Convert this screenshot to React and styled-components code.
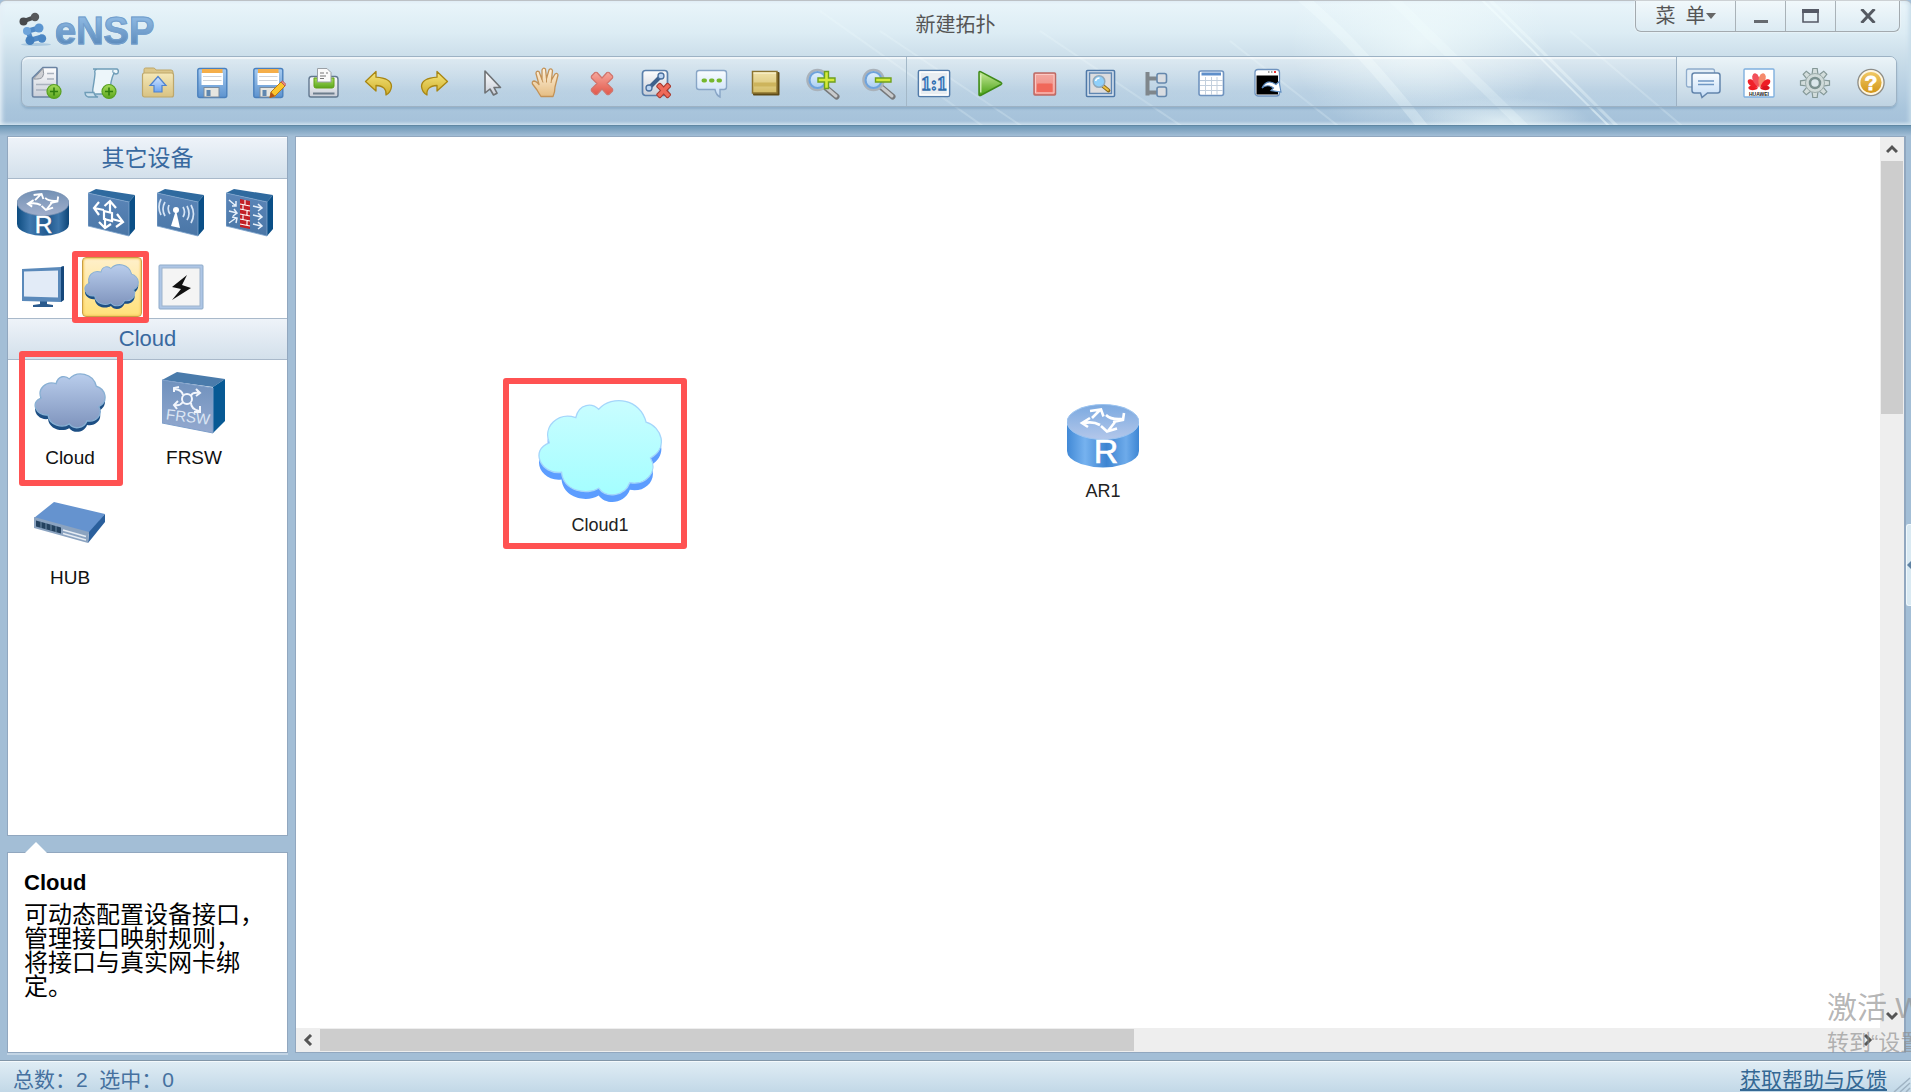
import React from 'react';
import styled, { createGlobalStyle } from 'styled-components';

const GlobalStyle = createGlobalStyle`
  * {
    box-sizing: border-box;
  }
  body {
    margin: 0;
    font-family: 'Liberation Sans', 'Noto Sans CJK SC', sans-serif;
    background: #a3bed6;
  }
  button {
    margin: 0;
    padding: 0;
    border: 0;
    background: none;
    font: inherit;
    color: inherit;
  }
  svg {
    display: block;
  }
`;

const Window = styled.div`
  position: relative;
  display: flex;
  flex-direction: column;
  height: 100vh;
  overflow: hidden;
`;

/* ---------- header ---------- */

const Header = styled.header`
  position: relative;
  padding-bottom: 18px;
  border-top: 1px solid #bcc1c5;
  border-bottom: 1px solid #5f87a3;
  border-radius: 6px 6px 0 0;
  background: linear-gradient(#e9f5fa 0, #dcecf4 32px, #cbdeea 56px, #a9c5dc 108px, #a6c2da 120px, #c3d8e8 124px);
  box-shadow: inset 3px 0 4px -1px #e4eff6, inset -3px 0 4px -1px #c6dbe9;
`;

const Streaks = styled.svg`
  position: absolute;
  top: 0;
  left: 0;
  pointer-events: none;
`;

const TitleRow = styled.div`
  position: relative;
  display: grid;
  grid-template-columns: 1fr auto 1fr;
  height: 55px;
`;

const Logo = styled.div`
  display: flex;
  align-items: flex-start;
  padding: 10px 0 0 18px;
`;

const LogoText = styled.span`
  margin-left: 3px;
  font-size: 38px;
  line-height: 40px;
  font-weight: bold;
  color: transparent;
  background: linear-gradient(#8bb6e0 20%, #5b8abb 85%);
  background-clip: text;
  -webkit-background-clip: text;
  -webkit-text-stroke: 1px #739fcd;
`;

const Title = styled.h1`
  margin: 0;
  padding-top: 9px;
  font-size: 20px;
  line-height: 30px;
  font-weight: normal;
  color: #555;
`;

const WindowControls = styled.div`
  display: flex;
  justify-self: end;
  height: 31px;
  margin-right: 11px;
  border: 1px solid #a3aaaf;
  border-top: 0;
  border-radius: 0 0 6px 6px;
  background: linear-gradient(#f1f8fb, #dcebf3);
  box-shadow: 0 0 2px #fff;
`;

const ControlButton = styled.button`
  display: flex;
  align-items: center;
  justify-content: center;
  width: ${({ $width }) => $width}px;
  font-size: 20px;
  line-height: 30px;
  color: #555;
  & + & {
    border-left: 1px solid #a9b2b8;
  }
`;

const Toolbar = styled.div`
  position: relative;
  display: flex;
  height: 51px;
  margin: 0 14px 0 21px;
  border: 1px solid #9db2c4;
  border-radius: 7px;
  background: linear-gradient(rgba(255, 255, 255, 0.35), rgba(255, 255, 255, 0.08) 70%, rgba(200, 220, 235, 0.4));
  box-shadow: inset 0 2px 1px rgba(255, 255, 255, 0.6), 0 2px 2px rgba(95, 135, 170, 0.35);
`;

const EditTools = styled.div`
  display: flex;
  justify-content: space-between;
  width: 885px;
  padding-right: 4px;
  border-right: 1px solid #a3b8c8;
`;

const RunTools = styled.div`
  display: flex;
  flex: 1;
  gap: 8px;
  padding-left: 2px;
`;

const HelpTools = styled.div`
  display: flex;
  gap: 8px;
  width: 220px;
  padding-left: 2px;
  border-left: 1px solid #9db2c4;
  border-radius: 0 6px 6px 0;
  background: linear-gradient(#ebf4f8, #bfd3e2);
`;

const ToolButton = styled.button`
  display: flex;
  align-items: center;
  justify-content: center;
  width: 48px;
  height: 49px;
`;

/* ---------- body ---------- */

const Body = styled.div`
  display: flex;
  flex: 1;
  gap: 7px;
  min-height: 0;
  padding: 10px 5px 7px 7px;
  background: linear-gradient(#6d97b6 0, #a3bed6 10px);
`;

const Sidebar = styled.aside`
  display: flex;
  flex-direction: column;
  gap: 16px;
  width: 281px;
`;

const Panel = styled.section`
  flex: 1;
  border: 1px solid #91a7bf;
  background: #fff;
`;

const PanelTitle = styled.h2`
  height: 42px;
  margin: 0;
  border-bottom: 1px solid #a9b9ca;
  border-top: 1px solid ${({ $divided }) => ($divided ? '#a9b9ca' : '#fff')};
  background: linear-gradient(#eef3f9, #d3e0eb);
  font-size: ${({ $divided }) => ($divided ? 22 : 23)}px;
  line-height: 40px;
  font-weight: normal;
  text-align: center;
  color: #39699f;
`;

const DeviceTypes = styled.div`
  display: grid;
  grid-template-columns: repeat(4, 69px);
  grid-template-rows: 68px 62px;
  row-gap: 9px;
`;

const TypeButton = styled.button`
  position: relative;
  display: flex;
  align-items: center;
  justify-content: center;
`;

const SelectedTile = styled.span`
  display: flex;
  align-items: center;
  justify-content: center;
  width: 60px;
  height: 60px;
  border: 1px solid #c99f45;
  border-radius: 4px;
  background: linear-gradient(#fff0cb, #ffe17a);
  box-shadow: inset 0 0 2px 1px #f5c95e;
`;

const Marker = styled.span`
  position: absolute;
  inset: ${({ $inset }) => $inset};
  border: 6px solid #ff5252;
  border-radius: 3px;
  pointer-events: none;
`;

const DeviceList = styled.div`
  display: grid;
  grid-template-columns: repeat(2, 124px);
  grid-auto-rows: 120px;
`;

const DeviceItem = styled.button`
  position: relative;
  display: flex;
  flex-direction: column;
  align-items: center;
  padding-top: 13px;
  font-size: 19px;
  line-height: 24px;
  color: #111;
`;

const DeviceArt = styled.span`
  display: flex;
  align-items: center;
  justify-content: center;
  height: 60px;
  margin-bottom: 13px;
`;

const Description = styled.section`
  position: relative;
  height: 201px;
  padding: 18px 16px;
  border: 1px solid #91a7bf;
  background: #fff;
  box-shadow: 0 2px 0 #c3d5e5;
  color: #000;
  &::before {
    content: '';
    position: absolute;
    top: -11px;
    left: 17px;
    border: 11px solid transparent;
    border-top: 0;
    border-bottom-color: #fff;
  }
  h3 {
    margin: 0;
    font-size: 22px;
    line-height: 24px;
  }
  p {
    margin: 8px 0 0;
    font-size: 24px;
    line-height: 24px;
    white-space: nowrap;
  }
`;

const Workspace = styled.main`
  display: grid;
  flex: 1;
  grid-template-columns: 1fr 24px;
  grid-template-rows: 1fr 24px;
  min-width: 0;
  border: 1px solid #91a7bf;
  border-right-width: 2px;
  background: #eee;
`;

const Canvas = styled.div`
  position: relative;
  background: #fff;
`;

const Node = styled.div`
  position: absolute;
  left: ${({ $x }) => $x}px;
  top: ${({ $y }) => $y}px;
  display: flex;
  flex-direction: column;
  align-items: center;
  gap: 10px;
  font-size: 18px;
  line-height: 24px;
  color: #222;
`;

const Scrollbar = styled.div`
  display: flex;
  flex-direction: ${({ $vertical }) => ($vertical ? 'column' : 'row')};
  background: #eee;
`;

const ScrollButton = styled.button`
  display: flex;
  align-items: center;
  justify-content: center;
  width: 24px;
  height: 24px;
  svg {
    transform: rotate(${({ $turn }) => $turn}deg);
  }
`;

const Track = styled.div`
  flex: 1;
`;

const Thumb = styled.div`
  width: ${({ $vertical }) => ($vertical ? '22px' : '53%')};
  height: ${({ $vertical }) => ($vertical ? '30%' : '22px')};
  margin: ${({ $vertical }) => ($vertical ? '0 1px' : '1px 0')};
  background: #cdcdcd;
`;

const SideHandle = styled.button`
  position: absolute;
  right: 0;
  top: 524px;
  display: flex;
  align-items: center;
  width: 5px;
  height: 82px;
  border-radius: 3px 0 0 3px;
  background: #d9e9f2;
  border: 1px solid #eff7fb;
  border-right: 0;
`;

const Watermark = styled.div`
  position: absolute;
  top: 986px;
  left: calc(100% - 84px);
  color: rgba(140, 140, 140, 0.65);
  white-space: nowrap;
  pointer-events: none;
  font-size: 30px;
  line-height: 44px;
  small {
    display: block;
    font-size: 22px;
    line-height: 26px;
  }
`;

const StatusBar = styled.footer`
  position: relative;
  display: flex;
  justify-content: space-between;
  height: 32px;
  padding: 3px 24px 0 13px;
  border-top: 1px solid #8296a8;
  background: linear-gradient(#e0edf5, #c2d8e7);
  box-shadow: inset 0 1px 0 #f4f9fc;
  font-size: 21px;
  line-height: 32px;
  color: #46719f;
  a {
    color: #346894;
    text-underline-offset: 2px;
  }
`;

const Grip = styled.svg`
  position: absolute;
  right: 0;
  bottom: 0;
`;

/* ---------- toolbar icons, all on a 36px grid ---------- */

const HiddenSvg = styled.svg`
  position: absolute;
`;

const Defs = () => (
  <HiddenSvg width="0" height="0" aria-hidden="true">
    <defs>
      {[
        ['gPaper', '#fdfdfe', '#c9ced8'],
        ['gGreen', '#a6dc5a', '#5aa51e'],
        ['gFolder', '#f5e8b8', '#d8c282'],
        ['gArrow', '#d4e6ff', '#6ea4f0'],
        ['gFloppy', '#a7cbf0', '#5d93cf'],
        ['gYellow', '#f6e67c', '#cfae2c'],
        ['gHand', '#fff3df', '#e5bd83'],
        ['gRed', '#f6a79c', '#e2574a'],
        ['gBubble', '#fafdff', '#c3dcf6'],
        ['gNote', '#f0e2aa', '#d3bc66'],
        ['gLens', '#eaf6ff', '#a3c9ef'],
        ['gPlay', '#c8ea9a', '#47a013'],
        ['gStop', '#f3aaa3', '#f08378'],
        ['gHelp', '#f4cf6e', '#cf8f0e'],
        ['gFace', '#5b86b9', '#4a76a6'],
        ['gFrsw', '#6f91bd', '#94a9cf'],
        ['gCloud', '#b9cdec', '#7f94bd'],
        ['gCyan', '#c9fdff', '#a4feff'],
        ['gTop', '#7391b5', '#a0aecb'],
        ['gTopLive', '#7ba9e0', '#b3c7ea'],
      ].map(([id, from, to]) => (
        <linearGradient key={id} id={id} x1="0" y1="0" x2="0" y2="1">
          <stop offset="0" stopColor={from} />
          <stop offset="1" stopColor={to} />
        </linearGradient>
      ))}
      <linearGradient id="gBody">
        <stop offset="0" stopColor="#0d4c80" />
        <stop offset="0.25" stopColor="#3f78ae" />
        <stop offset="0.6" stopColor="#21598e" />
        <stop offset="0.8" stopColor="#3c75aa" />
        <stop offset="1" stopColor="#0d4577" />
      </linearGradient>
      <linearGradient id="gBodyLive">
        <stop offset="0" stopColor="#4189d6" />
        <stop offset="0.25" stopColor="#76b2ef" />
        <stop offset="0.55" stopColor="#3d84d1" />
        <stop offset="0.82" stopColor="#6eabea" />
        <stop offset="1" stopColor="#3e86d4" />
      </linearGradient>
    </defs>
  </HiddenSvg>
);

const Icon = ({ children }) => (
  <svg width="36" height="36" viewBox="0 0 36 36" aria-hidden="true">
    {children}
  </svg>
);

const PlusBadge = () => (
  <g>
    <circle cx="26" cy="27.5" r="7" fill="url(#gGreen)" stroke="#58a023" strokeWidth="1.2" />
    <path d="M26 23.5v8M22 27.5h8" stroke="#2f7d0d" strokeWidth="1.6" />
  </g>
);

const NewIcon = () => (
  <Icon>
    <path d="M15 3.5h13q1 0 1 1V32q0 1-1 1H6q-1.5 0-1.500-1.500V14z" fill="url(#gPaper)" stroke="#6b84a3" strokeWidth="1.700" />
    <path d="M15 4.500q1.500 6-.5 8.500t-9 2z" fill="#cfd0d4" stroke="#8f959e" />
    <path d="M19 9.500h7M19 15h7M8 20.500h18M8 26h12" stroke="#aab2be" strokeWidth="1.400" />
    <PlusBadge />
  </Icon>
);

const ScrollIcon = () => (
  <Icon>
    <path d="M10 5h24q2 1 1 4-2 2-4 0-4 8-4 21H12q-3 0-2-6 2-12 2-15-1-3 2-4z" fill="#edf6fa" stroke="#6f9db8" strokeWidth="1.4" />
    <path d="M2 28.500h9q0 3 4 4.500H5q-3-1-3-4.500z" fill="#c9dfec" stroke="#6f9db8" strokeWidth="1.3" />
    <path d="M30 6q-1 2 1 4" fill="none" stroke="#6f9db8" />
    <PlusBadge />
  </Icon>
);

const OpenIcon = () => (
  <Icon>
    <path d="M5 9V5.500Q5 4 6.500 4h8Q16 4 17 6h15q2 0 2 2v5H5z" fill="#dcc78b" stroke="#bfa767" />
    <rect x="3.500" y="9" width="31" height="24" rx="2" fill="url(#gFolder)" stroke="#bda76b" strokeWidth="1.2" />
    <path d="M19 12.500l8 9h-4V28h-8v-6.500h-4z" fill="url(#gArrow)" stroke="#4f82cf" strokeWidth="1.2" />
  </Icon>
);

const Floppy = () => (
  <g>
    <rect x="3.800" y="4.500" width="29" height="29" rx="2" fill="url(#gFloppy)" stroke="#4a80bd" strokeWidth="1.4" />
    <rect x="8" y="5" width="20.500" height="4" fill="#f5ae49" />
    <rect x="7.500" y="9" width="21.500" height="12" fill="#fff" />
    <path d="M9 12.500h18.500M9 16.500h18.500" stroke="#cfd3d8" />
    <rect x="10" y="23.500" width="15" height="9.500" fill="#e7e6e0" stroke="#7b8b9d" />
    <rect x="12.500" y="26" width="4" height="6" fill="#5f87b0" />
  </g>
);

const SaveIcon = () => (
  <Icon>
    <Floppy />
  </Icon>
);

const SaveAsIcon = () => (
  <Icon>
    <Floppy />
    <path d="M21 28L31 18l4 4-10 10-5 1.500z" fill="#fbc62f" stroke="#b97a12" />
    <path d="M31 18l1.500-1.200 3.500 3.500L35 22z" fill="#e98b85" stroke="#a44" strokeWidth=".6" />
    <path d="M21 28l4 4-5.500 2z" fill="#b65316" />
  </Icon>
);

const PrintIcon = () => (
  <Icon>
    <path d="M6.500 12.500h24q2.500 0 2.500 3v15.500q0 2-2 2H6q-2 0-2-2V15.500q0-3 2.500-3z" fill="url(#gPaper)" stroke="#62788f" strokeWidth="1.400" />
    <path d="M9 14h20v8q0 2-2 2H11q-2 0-2-2z" fill="url(#gGreen)" stroke="#62a016" />
    <path d="M12.500 4.500H22l4 4V18H12.500z" fill="#fafafa" stroke="#9aa0a6" />
    <path d="M15 9h4M21 9h2M15 12h6M15 14.500h4" stroke="#777" strokeWidth="1.200" />
    <path d="M8 29.500h21.500" stroke="#6d7d8d" strokeWidth="2" />
  </Icon>
);

const bendPath = 'M4.500 17.500L15 7.500v5.700q15 1 15.500 9-.5 6-5.500 8.800 1-9-10-9.500v5.500z';

const UndoIcon = () => (
  <Icon>
    <path d={bendPath} fill="url(#gYellow)" stroke="#a88612" strokeWidth="1.300" strokeLinejoin="round" />
  </Icon>
);

const RedoIcon = () => (
  <Icon>
    <path d={bendPath} transform="translate(36 0) scale(-1 1)" fill="url(#gYellow)" stroke="#a88612" strokeWidth="1.300" strokeLinejoin="round" />
  </Icon>
);

const PointerIcon = () => (
  <Icon>
    <path d="M13 7v22l5-4 3.500 6 3.500-1.800-3-5.700h6.500z" fill="url(#gPaper)" stroke="#6e7174" strokeWidth="1.600" strokeLinejoin="round" />
  </Icon>
);

const HandIcon = () => (
  <Icon>
    <path d="M14 32.500q-2-3-4-6.500l-4.500-6q-1-2.500 1.500-3 2 0 5 3.500L9 9.500q0-3 3-2l3 8V6q1-3 3.500-1l1 9.500L22 6q2-2.500 3.500.5L24.500 16l3.500-6q2.500-1.500 3 1l-3 12q0 5-2 9.500z" fill="url(#gHand)" stroke="#c39257" strokeWidth="1.300" strokeLinejoin="round" />
    <path d="M15 15.500l1 3M19.500 14.500v4M24.500 16l-.5 3" stroke="#c39257" />
  </Icon>
);

const crossPath = 'M8.500 12l3.500-3.500q1-.5 2 0l5 5.500 5-5.500q1-.5 2 0l3.500 3.500q.5 1 0 2L24 19.500l5.500 5.500q.5 1 0 2L26 30.500q-1 .5-2 0L19 25l-5 5.500q-1 .5-2 0L8.500 27q-.5-1 0-2l5.500-5.500L8.500 14q-.5-1 0-2z';

const DeleteIcon = () => (
  <Icon>
    <path d={crossPath} fill="url(#gRed)" stroke="#d0746c" strokeLinejoin="round" strokeWidth="1.200" />
  </Icon>
);

const DeleteLinkIcon = () => (
  <Icon>
    <rect x="4.500" y="6.500" width="25" height="25" rx="3" fill="url(#gPaper)" stroke="#5a7fab" strokeWidth="1.700" />
    <path d="M11 24L23 12" stroke="#3f618c" strokeWidth="4" />
    <circle cx="11" cy="24" r="3" fill="#bcd5f3" stroke="#4a6f9d" strokeWidth="1.300" />
    <circle cx="23" cy="12" r="3" fill="#bcd5f3" stroke="#4a6f9d" strokeWidth="1.300" />
    <path d={crossPath} transform="translate(13.500 14) scale(.64)" fill="#ef6a5a" stroke="#a83a30" strokeWidth="1.700" />
  </Icon>
);

const TextIcon = () => (
  <Icon>
    <path d="M6 6.500h25q2.500 0 2.500 2.500v14q0 2.500-2.500 2.500h-4v7.500q-4-2-5-7.500H6q-2.500 0-2.500-2.500V9Q3.500 6.500 6 6.500z" fill="url(#gBubble)" stroke="#88a5c6" strokeWidth="1.400" />
    <path d="M10.500 16.500h1.500M18 16.500h1.500M25.500 16.500h1.500" stroke="#75b72f" strokeWidth="4" strokeLinecap="round" />
  </Icon>
);

const PaletteIcon = () => (
  <Icon>
    <rect x="4" y="8" width="26.500" height="23.500" rx="1" fill="#5e4a16" />
    <rect x="3.500" y="7.500" width="24.500" height="21.500" fill="url(#gNote)" stroke="#8c7430" strokeWidth="1.500" />
    <path d="M4.500 18.500h22.500v4H4.500z" fill="#cdb45c" />
    <path d="M4.500 9h22.500" stroke="#fff8d8" />
  </Icon>
);

const Lens = () => (
  <g>
    <path d="M21 23l11.500 9.500" stroke="#77797b" strokeWidth="6" strokeLinecap="round" />
    <path d="M21.500 23l10.500 9" stroke="#c9cbcd" strokeWidth="3" strokeLinecap="round" />
    <circle cx="13.500" cy="16" r="10" fill="url(#gLens)" stroke="#aab2ba" strokeWidth="2.500" />
    <circle cx="13.500" cy="16" r="8" fill="none" stroke="#6fa3dc" strokeWidth="2.200" />
  </g>
);

const ZoomInIcon = () => (
  <Icon>
    <Lens />
    <path d="M20.500 7.500h4v6.500h6.500v4h-6.500v6.500h-4v-6.500H14v-4h6.500z" fill="#d5ea3a" stroke="#6fa01c" strokeWidth="1.400" />
  </Icon>
);

const ZoomOutIcon = () => (
  <Icon>
    <Lens />
    <path d="M15.500 14H31v4H15.500z" fill="#d5ea3a" stroke="#6fa01c" strokeWidth="1.400" />
  </Icon>
);

const ActualSizeIcon = () => (
  <Icon>
    <rect x="3.500" y="6.500" width="31" height="26" rx="1.500" fill="#e8edf1" stroke="#527ba9" strokeWidth="1.700" />
    <rect x="5" y="8" width="28" height="23" fill="none" stroke="#fff" strokeWidth="1.500" />
    <text x="19" y="26" textAnchor="middle" fontFamily="Liberation Serif, serif" fontWeight="bold" fontSize="19" fill="#b6dbff" stroke="#2f6cab" strokeWidth="1.300">
      1:1
    </text>
  </Icon>
);

const StartIcon = () => (
  <Icon>
    <path d="M8 8.500q0-1.500 1.500-.8L30 18.500q1.500 1 0 2L9.500 31.500Q8 32 8 30.500z" fill="url(#gPlay)" stroke="#3f8a18" strokeWidth="1.500" />
    <path d="M9.800 10.500v18" stroke="#e2f5cb" strokeWidth="1.200" />
  </Icon>
);

const StopIcon = () => (
  <Icon>
    <rect x="7" y="9" width="21.500" height="22" rx="1" fill="url(#gStop)" stroke="#bd6a64" strokeWidth="1.500" />
    <rect x="10" y="19.500" width="15.500" height="8.500" rx="1" fill="#f0685a" />
    <path d="M8.500 10.500h18.500v18.500H8.500z" fill="none" stroke="#fac9c4" />
  </Icon>
);

const CaptureIcon = () => (
  <Icon>
    <rect x="3.500" y="6.500" width="28" height="26" rx="1" fill="#e2ebf4" stroke="#4f79a8" strokeWidth="1.600" />
    <rect x="6.500" y="9" width="22" height="20.500" fill="#dcdcde" stroke="#5f86b2" strokeWidth="1.500" />
    <path d="M20 22l5.500 4.500" stroke="#8a6a1c" strokeWidth="3.800" strokeLinecap="round" />
    <path d="M20.500 22.500l4.500 3.500" stroke="#f0c040" strokeWidth="2" strokeLinecap="round" />
    <circle cx="16" cy="17.500" r="5.800" fill="#8fd0fb" stroke="#8fa9bd" strokeWidth="1.500" />
    <path d="M12.500 17q1-3 4-3" stroke="#fff" strokeWidth="1.500" fill="none" />
  </Icon>
);

const TreeIcon = () => (
  <Icon>
    <path d="M8.500 8v23.500M8.500 14.500H19M8.500 28.500H19" stroke="#7f868b" strokeWidth="4" fill="none" />
    <rect x="18" y="9.500" width="9.500" height="9.500" rx="2" fill="#d9dde2" stroke="#6588ad" strokeWidth="1.600" />
    <rect x="18" y="23" width="9.500" height="9.500" rx="2" fill="#d9dde2" stroke="#6588ad" strokeWidth="1.600" />
  </Icon>
);

const TableIcon = () => (
  <Icon>
    <rect x="4" y="7" width="24.500" height="24.500" rx="2" fill="#fff" stroke="#6f93bf" strokeWidth="1.600" />
    <path d="M6.500 8.500h19.500v3H6.500z" fill="#5f8fca" />
    <path d="M5 16.500h23M5 21.500h23M5 26.500h23M10.500 13v18M16.500 13v18M22 13v18" stroke="#c2cfdd" />
  </Icon>
);

const ConsoleIcon = () => (
  <Icon>
    <rect x="4" y="5.500" width="24.500" height="26.500" rx="3" fill="#fff" stroke="#6f93bf" strokeWidth="1.300" />
    <path d="M5.500 11.500h21.500v19H5.500z" fill="#000" />
    <path d="M17 8h1.500M20 8h1.500" stroke="#888" strokeWidth="1.500" />
    <path d="M23 8h2" stroke="#e33" strokeWidth="2" />
    <path d="M11 24q5-10 14-3.500l3-3 2 10.500-10-1.500 2.500-2.500q-6-4.500-11.500 0z" fill="#fff" stroke="#5e8cc0" strokeWidth="1.100" />
  </Icon>
);

const ForumIcon = () => (
  <Icon>
    <path d="M3.500 5h24q2 0 2 2v16h-26q-2 0-2-2V7q0-2 2-2z" fill="#e3eef7" stroke="#8faccc" strokeWidth="1.300" />
    <path d="M9.500 9h23q2.500 0 2.500 2.500v15q0 2.500-2.500 2.500H22.500L17 33.500 15.500 29h-6Q7 29 7 26.500v-15Q7 9 9.500 9z" fill="url(#gBubble)" stroke="#6385ac" strokeWidth="1.500" />
    <path d="M13 17h16M13 20.500h16" stroke="#6f97c4" strokeWidth="1.300" />
  </Icon>
);

const petals = [
  [-82, 0.72, '#ee1c25'],
  [-50, 0.95, '#f0222b'],
  [-17, 1.1, '#f2505a'],
  [17, 1.1, '#f58a6c'],
  [50, 0.95, '#ee1c25'],
  [82, 0.72, '#d9141d'],
];

const HuaweiIcon = () => (
  <Icon>
    <rect x="3" y="5" width="30" height="28" rx="1" fill="#fff" stroke="#7fb0df" strokeWidth="1.400" />
    {petals.map(([angle, scale, color]) => (
      <path key={angle} d="M0-1.500Q-4.500-8-2.500-13 0-17 2.500-13 4.500-8 0-1.500z" transform={`translate(18 25) rotate(${angle}) scale(${scale})`} fill={color} />
    ))}
    <text x="18" y="31.500" textAnchor="middle" fontSize="5" fontWeight="bold" fill="#222">
      HUAWEI
    </text>
  </Icon>
);

const teeth = [0, 45, 90, 135, 180, 225, 270, 315];

const SettingsIcon = () => (
  <Icon>
    {teeth.map((angle) => (
      <path key={angle} d="M15 11l.8-6.500h4.400L21 11z" transform={`rotate(${angle} 18 19)`} fill="#d3dddc" stroke="#849897" strokeWidth="1.200" />
    ))}
    <circle cx="18" cy="19" r="9.500" fill="#cfdad9" stroke="#9dadac" />
    <circle cx="18" cy="19" r="5" fill="#dbe7ec" stroke="#7b9190" strokeWidth="2.500" />
  </Icon>
);

const HelpIcon = () => (
  <Icon>
    <circle cx="18" cy="18.500" r="13" fill="url(#gHelp)" stroke="#8d8d89" strokeWidth="1.500" />
    <circle cx="18" cy="18.500" r="11.500" fill="none" stroke="#fdf6e4" strokeWidth="1.800" />
    <text x="18" y="26" textAnchor="middle" fontSize="21" fontWeight="bold" fill="#fff" stroke="#fff" strokeWidth=".8">
      ?
    </text>
  </Icon>
);

/* ---------- device drawings ---------- */

const cloudPath =
  'M115 52C125 8 165 8 184 27C225-18 310-5 327 66C375 80 395 145 340 174C365 215 325 258 278 248C262 292 205 295 184 265C150 287 78 275 72 217C10 225-25 150 35 128C15 80 60 35 115 52Z';

const CloudArt = ({ width, live }) => (
  <svg width={width} viewBox="-2 -4 380 314" aria-hidden="true">
    <path d={cloudPath} transform="translate(0 22)" fill={live ? '#5c9dff' : '#1d4f84'} />
    <path d={cloudPath} fill={live ? 'url(#gCyan)' : 'url(#gCloud)'} stroke={live ? '#a5d6fb' : '#89b0d4'} strokeWidth={live ? 4 : 7} />
  </svg>
);

const RouterArt = ({ width, live }) => (
  <svg width={width} viewBox="0 0 72 65" aria-hidden="true">
    <path d="M0 18v29q0 8 14 13 22 7 44 0 14-5 14-13V18z" fill={live ? 'url(#gBodyLive)' : 'url(#gBody)'} />
    <ellipse cx="36" cy="18" rx="36" ry="17.500" fill={live ? 'url(#gTopLive)' : 'url(#gTop)'} stroke={live ? '#9cc4f0' : '#6b87ab'} />
    <g fill="none" stroke="#fff" strokeWidth="2.600">
      <path d="M25 14l8-8M23 7l11-1.500 2.500 7" />
      <path d="M39 11q5 5 16 4M57 9l-1 7-10 2" />
      <path d="M33 21q-7-4-16-2M23 14l-8 5 6 4" />
      <path d="M48 18l-7 9M34 22l6 5.500 10-3" />
    </g>
    <text x={live ? 39 : 37} y="59" textAnchor="middle" fontSize="34" fill="#fff" stroke="#fff" strokeWidth=".6">
      R
    </text>
  </svg>
);

const BoxArt = ({ width = 48, face = 'url(#gFace)', children }) => (
  <svg width={width} viewBox="0 0 48 48" aria-hidden="true">
    <path d="M0 4L8 0l39 6-6 7z" fill="#2f6a9f" />
    <path d="M41 13l6-7v34l-6 7z" fill="#0b4f87" />
    <path d="M0 4l41 9v34L0 37z" fill={face} stroke="#7da3cc" strokeWidth=".8" />
    {children}
  </svg>
);

const SwitchArt = () => (
  <BoxArt>
    <g fill="none" stroke="#fff" strokeWidth="2.200">
      <path d="M22 24V13M16.500 17l5.500-5 6 7M17 29v9M11 33l6 6 6-4M16 21L6 19M11 13l-5 6 5 7M24 30l11 3M29 25l6 8-7 5" />
      <path d="M16 22l8 2v8l-8-2z" />
    </g>
  </BoxArt>
);

const WirelessArt = () => (
  <BoxArt>
    <path d="M19 21l4 18-9-2z" fill="#fff" />
    <circle cx="19" cy="21" r="3" fill="#fff" />
    <path d="M12 16q-2 5 1 9M8 13q-4 7 0 14M4 10q-4 8 0 16M26 18q3 5 0 10M30 17q4 8 0 14M34 16q5 9 0 18" fill="none" stroke="#d5e4f5" strokeWidth="1.700" />
  </BoxArt>
);

const FirewallArt = () => (
  <BoxArt>
    <path d="M14 10l10 2v28l-10-2z" fill="#c21f26" />
    <path d="M14 15l10 2M14 20l10 2M14 25l10 2M14 30l10 2M14 35l10 2M19 11v5M17 16v5M21 22v5M17 26v5M21 32v5" stroke="#fff" strokeWidth="1.100" />
    <path d="M3 11l7 6M10 12v5H6M3 22l8 2M8 20l3 4-4 3M3 34l7-5M6 28l5 1-1 5M27 17l8 2M32 15l4 4-4 3M27 26l8 2M32 24l4 4-4 3M27 35l8 2M32 33l4 4-4 3" fill="none" stroke="#e7f0fa" strokeWidth="1.500" />
  </BoxArt>
);

const PcArt = () => (
  <svg width="44" height="42" viewBox="0 0 44 42" aria-hidden="true">
    <path d="M12 39l7-1v-4h7v4l6 1v2H12z" fill="#2a5a8d" />
    <path d="M1 3l39-2 2-1v34l-2 2L1 35z" fill="#5a89ba" />
    <path d="M40 1l3-1v34l-3 2z" fill="#15477b" />
    <path d="M3 5.500l34-1v27l-34-1z" fill="#e2ebf7" />
  </svg>
);

const LineArt = () => (
  <svg width="46" height="46" viewBox="0 0 46 46" aria-hidden="true">
    <rect x="1" y="1" width="44" height="44" rx="1" fill="#aec6e6" stroke="#8fabc9" />
    <rect x="4" y="4" width="38" height="38" fill="#f4f4f4" stroke="#9db3cc" />
    <path d="M29 11L14 23l9 2-9 11 19-12-9-3z" fill="#111" />
  </svg>
);

const FrswArt = () => (
  <svg width="64" viewBox="0 0 64 62" aria-hidden="true">
    <path d="M0 8L15 0l48 7-12 8z" fill="#4a7bab" />
    <path d="M51 15l12-8v42L51 61z" fill="#075994" />
    <path d="M0 8l51 8v45L0 51z" fill="url(#gFrsw)" stroke="#7d9ec9" />
    <g fill="none" stroke="#f2f6fc" strokeWidth="2">
      <circle cx="25" cy="27" r="5" />
      <path d="M21 23q-1-5-8-6M12 20v-4l5-1M29 24q1-4 8-3M34 17l4 4-4 3M21 30q-3 4-8 3M16 29l-4 4 3 4M29 31q0 6 8 8M38 34v6h-6" />
    </g>
    <text x="26" y="50" textAnchor="middle" fontSize="15" fill="#dce6f4" transform="rotate(7 26 46)">
      FRSW
    </text>
  </svg>
);

const HubArt = () => (
  <svg width="72" viewBox="0 0 72 42" aria-hidden="true">
    <path d="M0 16L20 0l51 12-16 20z" fill="#6593cf" />
    <path d="M55 30l16-18v8L54 41z" fill="#2a5f9c" />
    <path d="M0 15l55 15-1 11L0 26z" fill="#8ba3c0" />
    <path d="M2 18.500l25 7v6l-25-7z" fill="#24425f" />
    <path d="M7 20v6M12 21v6M17 22.500v6M22 24v6" stroke="#6f8ca8" />
    <path d="M29 28l23 6.500M29 31.500l23 6.500" stroke="#e7edf4" strokeWidth="1.400" />
  </svg>
);

const Chevron = () => (
  <svg width="12" height="12" viewBox="0 0 12 12" aria-hidden="true">
    <path d="M1 9l5-5 5 5" fill="none" stroke="#555" strokeWidth="3" />
  </svg>
);

/* ---------- page ---------- */

const editTools = [
  ['New topology', NewIcon],
  ['New paper', ScrollIcon],
  ['Open', OpenIcon],
  ['Save', SaveIcon],
  ['Save as', SaveAsIcon],
  ['Print', PrintIcon],
  ['Undo', UndoIcon],
  ['Redo', RedoIcon],
  ['Select', PointerIcon],
  ['Drag', HandIcon],
  ['Delete', DeleteIcon],
  ['Delete link', DeleteLinkIcon],
  ['Text', TextIcon],
  ['Palette', PaletteIcon],
  ['Zoom in', ZoomInIcon],
  ['Zoom out', ZoomOutIcon],
];

const runTools = [
  ['Actual size', ActualSizeIcon],
  ['Start', StartIcon],
  ['Stop', StopIcon],
  ['Capture', CaptureIcon],
  ['Show tree', TreeIcon],
  ['Grid', TableIcon],
  ['Console', ConsoleIcon],
];

const helpTools = [
  ['Forum', ForumIcon],
  ['Huawei', HuaweiIcon],
  ['Settings', SettingsIcon],
  ['Help', HelpIcon],
];

const renderTools = (tools) =>
  tools.map(([label, ToolIcon]) => (
    <ToolButton key={label} type="button" aria-label={label}>
      <ToolIcon />
    </ToolButton>
  ));

const AppHeader = () => (
  <Header>
    <Streaks width="100%" height="124" aria-hidden="true">
      <defs>
        <radialGradient id="glow">
          <stop offset="0" stopColor="#f2fcfc" stopOpacity=".7" />
          <stop offset="1" stopColor="#f2fcfc" stopOpacity="0" />
        </radialGradient>
      </defs>
      <ellipse cx="1420" cy="40" rx="130" ry="100" fill="url(#glow)" />
      <ellipse cx="1500" cy="120" rx="90" ry="24" fill="url(#glow)" />
      <g stroke="#f4ffff">
        <path d="M1300-5q60 50 126 135" fill="none" strokeWidth="10" opacity=".3" />
        <path d="M1390-5l138 135" strokeWidth="9" opacity=".25" />
        <path d="M1478-5l136 135" strokeWidth="2" opacity=".5" />
        <path d="M1486-5l136 135" strokeWidth="3" opacity=".35" />
        <path d="M1570 30l118 100M820 10l167 118M880 30l146 98M1040 30l146 98M1230 40l112 88" strokeWidth="2" opacity=".2" />
      </g>
    </Streaks>
    <TitleRow>
      <Logo>
        <svg width="34" height="36" viewBox="0 0 34 36" aria-hidden="true">
          <ellipse cx="18" cy="33.500" rx="15" ry="1.500" fill="#9bbdd8" opacity=".7" />
          <path d="M6 10L17 6" stroke="#4a4d50" strokeWidth="4" />
          <circle cx="5.500" cy="10.500" r="4" fill="#47494c" />
          <circle cx="17" cy="6" r="4.200" fill="#56585b" />
          <path d="M21 17L10 20l3 9 11-3" fill="none" stroke="#5089c6" strokeWidth="5" strokeLinejoin="round" />
          <circle cx="21" cy="17" r="4.500" fill="#5b95d0" />
          <circle cx="9" cy="20" r="4" fill="#6ea4da" />
          <circle cx="12" cy="29.500" r="4.500" fill="#447fbd" />
          <circle cx="24" cy="27.500" r="4.200" fill="#4a86c4" />
        </svg>
        <LogoText>eNSP</LogoText>
      </Logo>
      <Title>新建拓扑</Title>
      <WindowControls>
        <ControlButton type="button" $width={99}>
          菜&ensp;单
          <svg width="10" height="6" viewBox="0 0 10 6" aria-hidden="true">
            <path d="M0 0h10L5 6z" fill="#666" />
          </svg>
        </ControlButton>
        <ControlButton type="button" $width={50} aria-label="Minimize">
          <svg width="16" height="16" viewBox="0 0 16 16">
            <path d="M1 12h14v3H1z" fill="#666a70" />
          </svg>
        </ControlButton>
        <ControlButton type="button" $width={50} aria-label="Maximize">
          <svg width="18" height="14" viewBox="0 0 18 14">
            <path d="M1 1h15v12H1z" fill="none" stroke="#555a66" strokeWidth="1.600" />
            <path d="M0 0h17v4H0z" fill="#555a66" />
          </svg>
        </ControlButton>
        <ControlButton type="button" $width={64} aria-label="Close">
          <svg width="16" height="14" viewBox="0 0 16 14">
            <path d="M1.500 0l13 14M14.500 0L1.500 14" stroke="#555a62" strokeWidth="3" />
          </svg>
        </ControlButton>
      </WindowControls>
    </TitleRow>
    <Toolbar>
      <EditTools>{renderTools(editTools)}</EditTools>
      <RunTools>{renderTools(runTools)}</RunTools>
      <HelpTools>{renderTools(helpTools)}</HelpTools>
    </Toolbar>
  </Header>
);

const DevicePanel = () => (
  <Panel>
    <PanelTitle>其它设备</PanelTitle>
    <DeviceTypes>
      <TypeButton type="button" aria-label="Router">
        <RouterArt width={52} />
      </TypeButton>
      <TypeButton type="button" aria-label="Switch">
        <SwitchArt />
      </TypeButton>
      <TypeButton type="button" aria-label="WLAN">
        <WirelessArt />
      </TypeButton>
      <TypeButton type="button" aria-label="Firewall">
        <FirewallArt />
      </TypeButton>
      <TypeButton type="button" aria-label="PC">
        <PcArt />
      </TypeButton>
      <TypeButton type="button" aria-label="Other devices">
        <SelectedTile>
          <CloudArt width={55} />
        </SelectedTile>
        <Marker $inset="-5px -3px -5px -5px" />
      </TypeButton>
      <TypeButton type="button" aria-label="Connections">
        <LineArt />
      </TypeButton>
    </DeviceTypes>
    <PanelTitle $divided>Cloud</PanelTitle>
    <DeviceList>
      <DeviceItem type="button">
        <DeviceArt>
          <CloudArt width={72} />
        </DeviceArt>
        Cloud
        <Marker $inset="-9px 9px -6px 11px" />
      </DeviceItem>
      <DeviceItem type="button">
        <DeviceArt>
          <FrswArt />
        </DeviceArt>
        FRSW
      </DeviceItem>
      <DeviceItem type="button">
        <DeviceArt>
          <HubArt />
        </DeviceArt>
        HUB
      </DeviceItem>
    </DeviceList>
  </Panel>
);

const App = () => {
  return (
    <Window>
      <GlobalStyle />
      <Defs />
      <AppHeader />
      <Body>
        <Sidebar>
          <DevicePanel />
          <Description>
            <h3>Cloud</h3>
            <p>
              可动态配置设备接口，
              <br />
              管理接口映射规则，
              <br />
              将接口与真实网卡绑
              <br />
              定。
            </p>
          </Description>
        </Sidebar>
        <Workspace>
          <Canvas>
            <Node $x={241} $y={262}>
              <CloudArt width={126} live />
              Cloud1
              <Marker $inset="-21px -24px -12px -34px" />
            </Node>
            <Node $x={771} $y={267}>
              <RouterArt width={72} live />
              AR1
            </Node>
          </Canvas>
          <Scrollbar $vertical>
            <ScrollButton type="button" aria-label="Scroll up" $turn={0}>
              <Chevron />
            </ScrollButton>
            <Track>
              <Thumb $vertical />
            </Track>
            <ScrollButton type="button" aria-label="Scroll down" $turn={180}>
              <Chevron />
            </ScrollButton>
          </Scrollbar>
          <Scrollbar>
            <ScrollButton type="button" aria-label="Scroll left" $turn={-90}>
              <Chevron />
            </ScrollButton>
            <Track>
              <Thumb />
            </Track>
            <ScrollButton type="button" aria-label="Scroll right" $turn={90}>
              <Chevron />
            </ScrollButton>
          </Scrollbar>
        </Workspace>
      </Body>
      <StatusBar>
        <span>总数：2&nbsp;&nbsp;选中：0</span>
        <a href="#feedback">获取帮助与反馈</a>
        <Grip width="20" height="16" viewBox="0 0 20 16" aria-hidden="true">
          <path d="M3 16L19 2M9 16l10-9M15 16l4-4" stroke="#9fb3c3" strokeWidth="1.500" />
        </Grip>
      </StatusBar>
      <SideHandle type="button" aria-label="Expand side panel">
        <svg width="4" height="8" viewBox="0 0 4 8">
          <path d="M4 0v8L0 4z" fill="#5f82a3" />
        </svg>
      </SideHandle>
      <Watermark>
        激活 W<small>转到“设置</small>
      </Watermark>
    </Window>
  );
};

export default App;
